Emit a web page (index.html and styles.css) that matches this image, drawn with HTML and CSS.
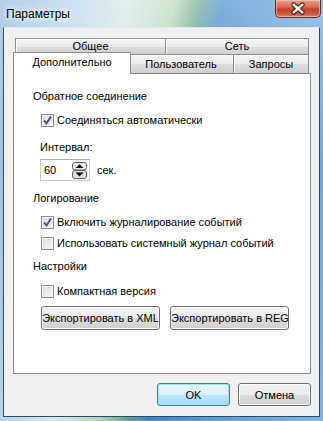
FILE: index.html
```html
<!DOCTYPE html>
<html lang="ru">
<head>
    <meta charset="UTF-8"/>
    <title>Параметры</title>
    <link rel="stylesheet" href="styles.css">
</head>
<body>
<div class="window">
    <div class="titlebar">
        <span class="title">Параметры</span>
        <div class="close-btn">
            <svg width="46" height="18" viewBox="0 0 46 18">
                <path d="M18.5 4.5 L27.5 12.5 M27.5 4.5 L18.5 12.5" stroke="#4a1d14" stroke-width="5" stroke-linecap="round"/>
                <path d="M18.5 4.5 L27.5 12.5 M27.5 4.5 L18.5 12.5" stroke="#fff" stroke-width="2.6" stroke-linecap="round"/>
            </svg>
        </div>
    </div>

    <div class="client">
        <div class="tabwidget">
            <div class="tab-row row-top">
                <div class="tab tab-general">Общее</div>
                <div class="tab tab-net">Сеть</div>
            </div>
            <div class="tab-row row-bottom">
                <div class="tab tab-extra active">Дополнительно</div>
                <div class="tab tab-user">Пользователь</div>
                <div class="tab tab-req">Запросы</div>
            </div>

            <div class="panel">
                <div class="section">Обратное соединение</div>
                <label class="check row-auto">
                    <span class="box checked">
                        <svg width="11" height="11" viewBox="0 0 11 11"><path d="M2 5.5 L4.5 8.5 L9 1.5" fill="none" stroke="#3b4f9a" stroke-width="1.9"/></svg>
                    </span>
                    Соединяться автоматически
                </label>
                <div class="field-label">Интервал:</div>
                <div class="spin-row">
                    <div class="spinbox">
                        <span class="spin-value">60</span>
                        <svg class="spin-btns" width="15" height="17" viewBox="0 0 15 17">
                            <rect x="0.5" y="0.5" width="14" height="7.5" rx="2.5" fill="#ececec" stroke="#5f5f5f"/>
                            <rect x="0.5" y="8.5" width="14" height="8" rx="2.5" fill="#dedede" stroke="#5f5f5f"/>
                            <path d="M3.5 6 L7.5 2.2 L11.5 6 Z" fill="#000"/>
                            <path d="M3.5 10.5 L11.5 10.5 L7.5 14.5 Z" fill="#000"/>
                        </svg>
                    </div>
                    <span class="unit">сек.</span>
                </div>

                <div class="section sec-log">Логирование</div>
                <label class="check row-journal">
                    <span class="box checked">
                        <svg width="11" height="11" viewBox="0 0 11 11"><path d="M2 5.5 L4.5 8.5 L9 1.5" fill="none" stroke="#3b4f9a" stroke-width="1.9"/></svg>
                    </span>
                    Включить журналирование событий
                </label>
                <label class="check row-system">
                    <span class="box"></span>
                    Использовать системный журнал событий
                </label>

                <div class="section sec-settings">Настройки</div>
                <label class="check row-compact">
                    <span class="box"></span>
                    Компактная версия
                </label>

                <div class="export-row">
                    <button class="btn export">Экспортировать в XML</button>
                    <button class="btn export">Экспортировать в REG</button>
                </div>
            </div>
        </div>

        <div class="footer">
            <button class="btn default">OK</button>
            <button class="btn">Отмена</button>
        </div>
    </div>
</div>
</body>
</html>
```

FILE: styles.css
```css
body {
    margin: 0;
    padding: 0;
    font-family: "Liberation Sans", Arial, sans-serif;
    font-size: 11px;
    color: #000;
}

.window {
    width: 323px;
    height: 421px;
    display: flex;
    flex-direction: column;
    box-sizing: border-box;
    background:
        linear-gradient(180deg, rgba(255, 255, 255, 0.35) 0%, rgba(255, 255, 255, 0) 40%),
        linear-gradient(100deg, #8cb6de 0%, #b4d2ea 18%, #d6e8e8 32%, #b4d6b4 44%, #6aa58c 50%, #3d86c8 56%, #5a9cd6 72%, #7fb3e2 100%);
}

.titlebar {
    height: 27px;
    display: flex;
    align-items: flex-start;
}

.title {
    margin: 7px 0 0 6px;
    font-size: 12px;
    text-shadow: 0 0 6px #fff, 0 0 10px #fff;
}

.close-btn {
    margin-left: auto;
    margin-right: 2px;
    width: 46px;
    height: 18px;
    box-sizing: border-box;
    border: 1px solid #6b2a1e;
    border-top: none;
    border-radius: 0 0 5px 5px;
    background: linear-gradient(180deg, #eba08c 0%, #d86f56 40%, #c2412a 55%, #cc5f44 85%, #e08a73 100%);
    box-shadow: inset 0 0 0 1px rgba(255, 220, 210, 0.5);
    display: flex;
}

.client {
    flex: 1;
    margin: 0 3px 4px 3px;
    background: #f0f0f0;
    border: 1px solid #2b4a6c;
    border-top-color: #dfe8f0;
    display: flex;
    flex-direction: column;
}

.tabwidget {
    padding: 10px 8px 0 9px;
}

.tab-row {
    display: flex;
    padding: 0 2px;
}

.tab {
    box-sizing: border-box;
    border: 1px solid #898c95;
    background: linear-gradient(180deg, #f4f4f4 0%, #ebebeb 50%, #dddddd 51%, #cfcfcf 100%);
    box-shadow: inset 0 1px 0 #fff, inset 1px 0 0 #fafafa;
    text-align: center;
    white-space: nowrap;
}

.row-top .tab {
    height: 17px;
    line-height: 15px;
}

.tab-general {
    width: 151px;
}

.tab-net {
    width: 144px;
    margin-left: -1px;
}

.row-bottom {
    margin-top: -1px;
}

.row-bottom .tab {
    height: 19px;
    line-height: 18px;
    border-bottom: none;
}

.tab-extra {
    width: 114px;
}

.tab-user {
    width: 106px;
    margin-left: -1px;
}

.tab-req {
    width: 76px;
    margin-left: -1px;
}

.tab.active {
    position: relative;
    z-index: 1;
    width: 118px;
    height: 22px;
    margin: -2px -2px -1px -2px;
    background: #fff;
    box-shadow: none;
    line-height: 19px;
}

.panel {
    box-sizing: border-box;
    height: 301px;
    background: #fff;
    border: 1px solid #898c95;
    padding: 14px 0 0 19px;
}

.section {
    line-height: 16px;
}

.check {
    display: flex;
    align-items: center;
    height: 16px;
    margin-left: 8px;
}

.box {
    width: 13px;
    height: 13px;
    box-sizing: border-box;
    border: 1px solid #8e8f8f;
    background: linear-gradient(135deg, #dcdcdc 0%, #f6f6f6 100%);
    box-shadow: inset 0 0 0 1px #f4f4f4;
    margin-right: 3px;
    display: flex;
    align-items: center;
    justify-content: center;
}

.row-auto {
    margin-top: 8px;
}

.field-label {
    margin: 11px 0 0 7px;
    line-height: 16px;
}

.spin-row {
    display: flex;
    align-items: center;
    margin: 4px 0 0 7px;
}

.spinbox {
    width: 50px;
    height: 22px;
    box-sizing: border-box;
    border: 1px solid #c8ccd2;
    border-top-color: #abadb3;
    display: flex;
    align-items: center;
    padding: 0 2px 0 3px;
}

.spin-value {
    flex: 1;
}

.unit {
    margin-left: 7px;
}

.sec-log {
    margin-top: 9px;
}

.row-journal {
    margin-top: 8px;
}

.row-system {
    margin-top: 5px;
}

.sec-settings {
    margin-top: 7px;
}

.row-compact {
    margin-top: 9px;
}

.export-row {
    display: flex;
    gap: 10px;
    margin: 7px 0 0 8px;
}

.btn {
    box-sizing: border-box;
    font-family: inherit;
    font-size: 11px;
    color: #000;
    height: 23px;
    padding: 0;
    border: 1px solid #707070;
    border-radius: 3px;
    background: linear-gradient(180deg, #f2f2f2 0%, #ebebeb 50%, #dddddd 51%, #cfcfcf 100%);
    box-shadow: inset 0 0 0 1px #fcfcfc;
    white-space: nowrap;
}

.btn.export {
    width: 119px;
    height: 24px;
}

.footer {
    display: flex;
    justify-content: flex-end;
    gap: 8px;
    margin: 9px 8px 0 0;
}

.footer .btn {
    width: 73px;
}

.btn.default {
    border-color: #3c7fb1;
    background: linear-gradient(180deg, #eaf6fd 0%, #d9f0fc 50%, #bee6fd 51%, #a7d9f5 100%);
    box-shadow: inset 0 0 0 1px #98e4f8;
}
```
